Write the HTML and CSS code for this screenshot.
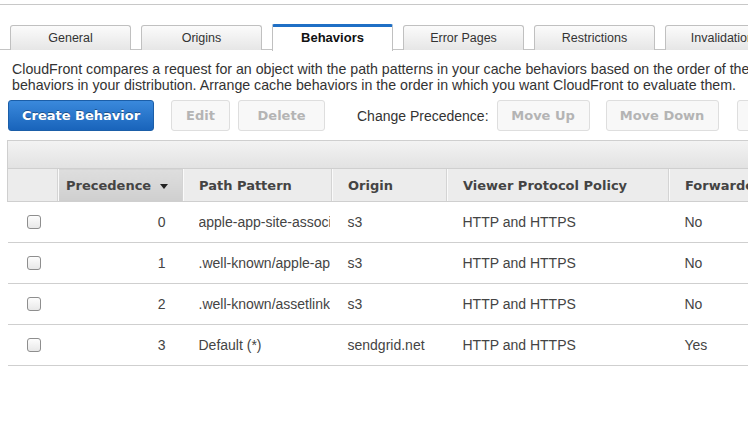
FILE: index.html
```html
<!DOCTYPE html>
<html>
<head>
<meta charset="utf-8">
<link rel="stylesheet" href="styles.css">
</head>
<body>
<div class="page">
  <div class="topline"></div>
  <div class="tabs">
    <div class="tab">General</div>
    <div class="tab">Origins</div>
    <div class="tab active">Behaviors</div>
    <div class="tab">Error Pages</div>
    <div class="tab">Restrictions</div>
    <div class="tab">Invalidations</div>
  </div>
  <p class="desc">CloudFront compares a request for an object with the path patterns in your cache behaviors based on the order of the cache behaviors in your distribution. Arrange cache behaviors in the order in which you want CloudFront to evaluate them.</p>
  <div class="toolbar">
    <button class="btn primary">Create Behavior</button>
    <button class="btn disabled b-edit">Edit</button>
    <button class="btn disabled b-del">Delete</button>
    <span class="label">Change Precedence:</span>
    <button class="btn disabled b-up">Move Up</button>
    <button class="btn disabled b-down">Move Down</button>
    <button class="btn disabled b-save">Save</button>
  </div>
  <div class="tablewrap">
    <div class="tabletop"></div>
    <table class="grid">
      <colgroup>
        <col class="c-check"><col class="c-prec"><col class="c-path"><col class="c-origin"><col class="c-vpp"><col class="c-fwd">
      </colgroup>
      <thead>
        <tr>
          <th></th>
          <th class="sorted">Precedence <span class="caret"></span></th>
          <th>Path Pattern</th>
          <th>Origin</th>
          <th>Viewer Protocol Policy</th>
          <th>Forwarded Query Strings</th>
        </tr>
      </thead>
      <tbody>
        <tr><td class="chk"><span class="cb"></span></td><td class="num">0</td><td><div class="clip">apple-app-site-association</div></td><td>s3</td><td>HTTP and HTTPS</td><td>No</td></tr>
        <tr><td class="chk"><span class="cb"></span></td><td class="num">1</td><td><div class="clip">.well-known/apple-app-site-association</div></td><td>s3</td><td>HTTP and HTTPS</td><td>No</td></tr>
        <tr><td class="chk"><span class="cb"></span></td><td class="num">2</td><td><div class="clip">.well-known/assetlinks.json</div></td><td>s3</td><td>HTTP and HTTPS</td><td>No</td></tr>
        <tr><td class="chk"><span class="cb"></span></td><td class="num">3</td><td><div class="clip">Default (*)</div></td><td>sendgrid.net</td><td>HTTP and HTTPS</td><td>Yes</td></tr>
      </tbody>
    </table>
  </div>
</div>
</body>
</html>
```
FILE: styles.css
```css
html, body {
  margin: 0;
  padding: 0;
  background: #fff;
  overflow: hidden;
}
.page {
  width: 748px;
  height: 429px;
  overflow: hidden;
  font-family: "Liberation Sans", Arial, sans-serif;
  color: #444;
}
.topline {
  margin-top: 4px;
  border-top: 1px solid #c8c8c8;
  width: 100%;
}
.tabs {
  display: flex;
  gap: 10px;
  padding: 19px 0 0 10px;
  border-bottom: 1px solid #c4c4c4;
  height: 25px;
  box-sizing: content-box;
  white-space: nowrap;
}
.tab {
  flex: 0 0 121px;
  box-sizing: border-box;
  height: 25px;
  margin-top: 1px;
  border: 1px solid #c0c0c0;
  border-bottom: none;
  border-radius: 3px 3px 0 0;
  background: linear-gradient(#fbfbfb, #e6e6e6);
  font-size: 12.5px;
  color: #333;
  text-align: center;
  line-height: 24px;
  overflow: hidden;
}
.tab.active {
  margin-top: 0;
  height: 27px;
  background: #fff;
  border-top: 3px solid #1f6fc5;
  border-radius: 2px 2px 0 0;
  font-weight: bold;
  font-size: 13px;
  color: #111;
  line-height: 22px;
  position: relative;
}
.desc {
  margin: 11px 0 0 12px;
  width: 800px;
  font-size: 14.2px;
  line-height: 16px;
  color: #333;
}
.toolbar {
  display: flex;
  align-items: center;
  margin: 7px 0 0 8px;
  height: 31px;
  white-space: nowrap;
}
.btn {
  font-family: "DejaVu Sans", Verdana, sans-serif;
  font-weight: bold;
  font-size: 13px;
  height: 31px;
  box-sizing: border-box;
  border-radius: 3px;
  padding: 0;
  flex: none;
}
.primary {
  width: 146px;
  color: #fff;
  background: linear-gradient(#3a89dc, #1964bb);
  border: 1px solid #1b5ea8;
  text-shadow: 0 -1px 0 rgba(0,0,0,0.35);
}
.disabled {
  color: #b4b4b4;
  background: #f8f8f8;
  border: 1px solid #dedede;
}
.b-edit { width: 59px; margin-left: 17px; }
.b-del { width: 87px; margin-left: 8px; }
.b-up { width: 93px; margin-left: 8px; }
.b-down { width: 113px; margin-left: 16px; }
.b-save { width: 80px; margin-left: 18px; }
.label {
  margin-left: 32px;
  font-size: 14px;
  color: #333;
}
.tablewrap {
  margin: 9px 0 0 7px;
  width: 900px;
}
.tabletop {
  height: 27px;
  border: 1px solid #cfcfcf;
  border-bottom: none;
  background: linear-gradient(#f3f3f3, #e2e2e2);
}
.grid {
  border-collapse: collapse;
  table-layout: fixed;
  width: 900px;
  font-size: 14px;
}
.c-check { width: 50px; }
.c-prec { width: 125px; }
.c-path { width: 149px; }
.c-origin { width: 115px; }
.c-vpp { width: 222px; }
.c-fwd { width: 239px; }
.grid th {
  height: 33px;
  box-sizing: border-box;
  padding: 0 0 0 16px;
  text-align: left;
  font-family: "DejaVu Sans", Verdana, sans-serif;
  font-weight: bold;
  font-size: 13px;
  color: #444;
  background: #ececec;
  border-top: 1px solid #cfcfcf;
  border-bottom: 1px solid #cfcfcf;
  border-left: 1px solid #d4d4d4;
  box-shadow: inset 1px 0 0 #fafafa;
  white-space: nowrap;
  overflow: hidden;
}
.grid th:first-child {
  border-left: 1px solid #cfcfcf;
  box-shadow: none;
}
.grid th.sorted {
  background: linear-gradient(#dedede, #cfcfcf);
  padding-left: 8px;
}
.caret {
  display: inline-block;
  width: 0;
  height: 0;
  border-left: 4px solid transparent;
  border-right: 4px solid transparent;
  border-top: 5px solid #222;
  vertical-align: middle;
  margin-left: 4px;
}
.grid td {
  height: 41px;
  box-sizing: border-box;
  padding: 0 0 0 16px;
  border-bottom: 1px solid #cfcfcf;
  color: #444;
  white-space: nowrap;
  overflow: hidden;
}
.grid td.num {
  text-align: right;
  padding: 0 17px 0 0;
}
.grid td.chk {
  padding-left: 19px;
}
.clip {
  width: 131px;
  overflow: hidden;
  white-space: nowrap;
}
.cb {
  display: block;
  width: 14px;
  height: 14px;
  box-sizing: border-box;
  border: 1px solid #8e8e8e;
  border-radius: 3px;
  background: linear-gradient(#fdfdfd, #e8e8e8);
}
```
